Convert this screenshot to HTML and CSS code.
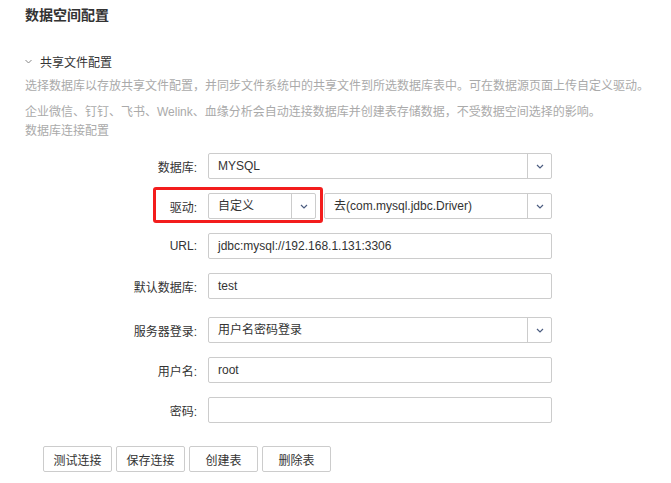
FILE: index.html
```html
<!DOCTYPE html>
<html lang="zh-CN">
<head>
    <meta charset="UTF-8">
    <meta name="viewport" content="width=device-width, initial-scale=1.0">
    <title>数据空间配置</title>
    <link rel="stylesheet" href="styles.css">
</head>
<body>

    <div class="page">
        <h1 class="title">数据空间配置</h1>

        <div class="section-head">
            <svg class="fold" width="7" height="5" viewBox="0 0 7 5"><path d="M0.5 1l3 3 3-3" fill="none" stroke="#888" stroke-width="1"/></svg>
            <span>共享文件配置</span>
        </div>

        <p class="desc">选择数据库以存放共享文件配置，并同步文件系统中的共享文件到所选数据库表中。可在数据源页面上传自定义驱动。</p>
        <p class="desc">企业微信、钉钉、飞书、Welink、血缘分析会自动连接数据库并创建表存储数据，不受数据空间选择的影响。</p>
        <div class="sub">数据库连接配置</div>

        <div class="form">
            <div class="row">
                <label>数据库:</label>
                <div class="select wide">
                    <span class="value">MYSQL</span>
                    <span class="arrow"><svg width="8" height="5" viewBox="0 0 8 5"><path d="M1 1l3 3 3-3" fill="none" stroke="#4c5d80" stroke-width="1.2"/></svg></span>
                </div>
            </div>

            <div class="row">
                <label>驱动:</label>
                <div class="select small">
                    <span class="value">自定义</span>
                    <span class="arrow"><svg width="8" height="5" viewBox="0 0 8 5"><path d="M1 1l3 3 3-3" fill="none" stroke="#4c5d80" stroke-width="1.2"/></svg></span>
                </div>
                <div class="select driver">
                    <span class="value">去(com.mysql.jdbc.Driver)</span>
                    <span class="arrow"><svg width="8" height="5" viewBox="0 0 8 5"><path d="M1 1l3 3 3-3" fill="none" stroke="#4c5d80" stroke-width="1.2"/></svg></span>
                </div>
                <div class="mark"></div>
            </div>

            <div class="row">
                <label>URL:</label>
                <div class="input">jdbc:mysql://192.168.1.131:3306</div>
            </div>

            <div class="row">
                <label>默认数据库:</label>
                <div class="input">test</div>
            </div>

            <div class="row push">
                <label>服务器登录:</label>
                <div class="select wide">
                    <span class="value">用户名密码登录</span>
                    <span class="arrow"><svg width="8" height="5" viewBox="0 0 8 5"><path d="M1 1l3 3 3-3" fill="none" stroke="#4c5d80" stroke-width="1.2"/></svg></span>
                </div>
            </div>

            <div class="row">
                <label>用户名:</label>
                <div class="input">root</div>
            </div>

            <div class="row">
                <label>密码:</label>
                <div class="input"></div>
            </div>
        </div>

        <div class="buttons">
            <button>测试连接</button>
            <button>保存连接</button>
            <button>创建表</button>
            <button>删除表</button>
        </div>
    </div>

</body>
</html>
```

FILE: styles.css
```css
body {
    margin: 0;
    background: #fff;
    font-family: "Liberation Sans", "Noto Sans CJK SC", sans-serif;
    font-size: 12px;
    color: #333;
    text-spacing-trim: space-all;
}

.page {
    padding: 5px 0 0 25px;
}

.title {
    margin: 0;
    font-size: 14px;
    font-weight: bold;
    line-height: 20px;
    color: #333;
}

.section-head {
    display: flex;
    align-items: center;
    margin-top: 26px;
    height: 20px;
    font-size: 12px;
    color: #333;
}

.fold {
    margin-right: 8px;
}

.desc {
    margin: 0;
    line-height: 26px;
    color: #aaa;
}

.desc:first-of-type {
    margin-top: 2px;
}

.sub {
    margin-top: -3px;
    line-height: 18px;
    color: #aaa;
}

.form {
    margin-top: 13px;
    padding-left: 92px;
    display: flex;
    flex-direction: column;
    gap: 14px;
}

.row {
    position: relative;
    display: flex;
    align-items: center;
    height: 26px;
}

.row.push {
    margin-top: 4px;
}

.row label {
    width: 80px;
    margin-right: 11px;
    text-align: right;
    white-space: nowrap;
    color: #333;
}

.input,
.select {
    box-sizing: border-box;
    height: 26px;
    border: 1px solid #ccc;
    border-radius: 2px;
    background: #fff;
    color: #333;
    line-height: 24px;
}

.input {
    width: 344px;
    padding-left: 9px;
}

.select {
    display: flex;
}

.select .value {
    flex: 1;
    padding-left: 9px;
}

.select .arrow {
    width: 23px;
    border-left: 1px solid #ccc;
    display: flex;
    align-items: center;
    justify-content: center;
}

.select.wide {
    width: 344px;
}

.select.small {
    width: 108px;
}

.select.driver {
    width: 228px;
    margin-left: 8px;
}

.mark {
    position: absolute;
    left: 36px;
    top: -6px;
    width: 170px;
    height: 36px;
    box-sizing: border-box;
    border: 3px solid #f31d1d;
    border-radius: 3px;
}

.buttons {
    margin: 23px 0 0 18px;
    display: flex;
    gap: 4px;
}

.buttons button {
    width: 69px;
    height: 26px;
    padding: 0;
    border: 1px solid #ccc;
    border-radius: 2px;
    background: #fff;
    font-family: inherit;
    font-size: 12px;
    color: #333;
    cursor: pointer;
}
```
